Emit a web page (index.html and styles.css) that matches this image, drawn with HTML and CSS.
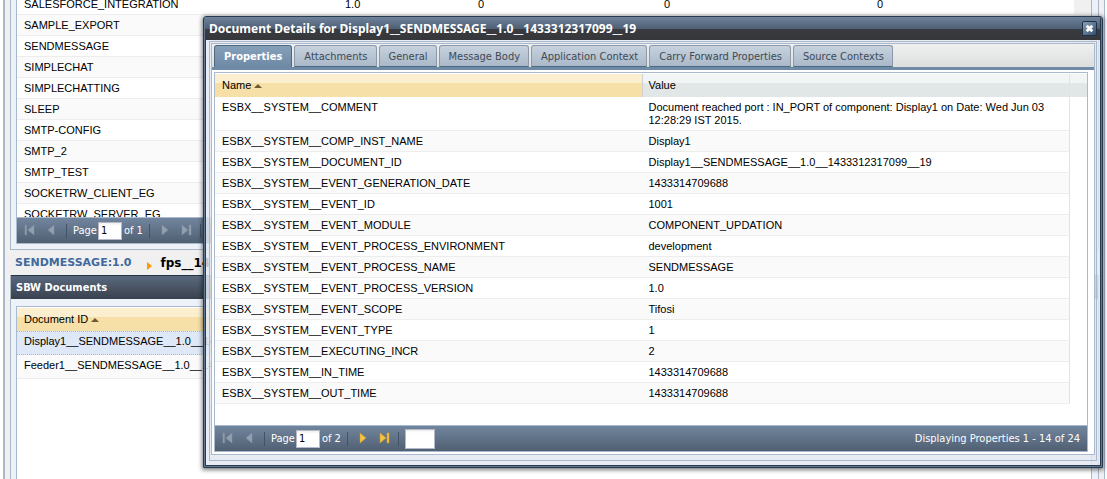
FILE: index.html
```html
<!DOCTYPE html>
<html lang="en">
<head>
    <meta charset="UTF-8">
    <meta name="viewport" content="width=device-width, initial-scale=1.0">
    <title>SBW Documents</title>
    <link rel="stylesheet" href="styles.css">
</head>
<body>
    <!-- Shared toolbar icons -->
    <svg class="sprite" aria-hidden="true">
        <symbol id="icon-first" viewBox="0 0 16 16"><path d="M3 2h1.5v10H3zM12 2v10L6 7z"/></symbol>
        <symbol id="icon-prev" viewBox="0 0 16 16"><path d="M10 2v10L4 7z"/></symbol>
        <symbol id="icon-next" viewBox="0 0 16 16"><path d="M6 2v10l6-5z"/></symbol>
        <symbol id="icon-last" viewBox="0 0 16 16"><path d="M4 2v10l6-5zM11 2h2v10h-2z"/></symbol>
    </svg>

    <main class="page">
        <section class="panel panel-top">
            <div class="grid">
                <div class="grid-view">
                    <table class="app-table">
                        <colgroup><col class="col-app"><col class="col-version"><col class="col-a"><col class="col-b"><col></colgroup>
                        <tbody>
                            <tr><td>SALESFORCE_INTEGRATION</td><td>1.0</td><td>0</td><td>0</td><td>0</td></tr>
                            <tr><td>SAMPLE_EXPORT</td><td>1.0</td><td>0</td><td>0</td><td>0</td></tr>
                            <tr><td>SENDMESSAGE</td><td></td><td></td><td></td><td></td></tr>
                            <tr><td>SIMPLECHAT</td><td></td><td></td><td></td><td></td></tr>
                            <tr><td>SIMPLECHATTING</td><td></td><td></td><td></td><td></td></tr>
                            <tr><td>SLEEP</td><td></td><td></td><td></td><td></td></tr>
                            <tr><td>SMTP-CONFIG</td><td></td><td></td><td></td><td></td></tr>
                            <tr><td>SMTP_2</td><td></td><td></td><td></td><td></td></tr>
                            <tr><td>SMTP_TEST</td><td></td><td></td><td></td><td></td></tr>
                            <tr><td>SOCKETRW_CLIENT_EG</td><td></td><td></td><td></td><td></td></tr>
                            <tr><td>SOCKETRW_SERVER_EG</td><td></td><td></td><td></td><td></td></tr>
                        </tbody>
                    </table>
                </div>
                <div class="pager">
                    <button type="button" aria-label="First page" disabled><svg><use href="#icon-first"/></svg></button>
                    <button type="button" aria-label="Previous page" disabled><svg><use href="#icon-prev"/></svg></button>
                    <span class="separator"></span>
                    <label for="appPage">Page</label>
                    <input class="page-input" id="appPage" type="text" value="1">
                    <span>of 1</span>
                    <span class="separator"></span>
                    <button type="button" aria-label="Next page" disabled><svg><use href="#icon-next"/></svg></button>
                    <button type="button" aria-label="Last page" disabled><svg><use href="#icon-last"/></svg></button>
                    <span class="separator"></span>
                </div>
            </div>
        </section>

        <nav class="breadcrumb">
            <a href="#">SENDMESSAGE:1.0</a>
            <span class="crumb-arrow"></span>
            <span>fps__14</span>
        </nav>

        <section class="panel panel-documents">
            <h2>SBW Documents</h2>
            <div class="panel-body">
                <div class="grid">
                    <table class="document-table">
                        <thead>
                            <tr><th class="sorted">Document ID <span class="sort-arrow"></span></th></tr>
                        </thead>
                        <tbody>
                            <tr class="selected"><td>Display1__SENDMESSAGE__1.0__1433312317099__19</td></tr>
                            <tr><td>Feeder1__SENDMESSAGE__1.0__1433312317099__19</td></tr>
                        </tbody>
                    </table>
                </div>
            </div>
        </section>
    </main>

    <div class="window" role="dialog" aria-labelledby="windowTitle">
        <div class="window-header">
            <h1 id="windowTitle">Document Details for Display1__SENDMESSAGE__1.0__1433312317099__19</h1>
            <button class="close" type="button" aria-label="Close">
                <svg viewBox="0 0 14 14"><path d="M4 4l6 6M10 4l-6 6"/></svg>
            </button>
        </div>
        <div class="window-body">
            <div class="tab-panel">
                <div class="tabs" role="tablist">
                    <button class="tab active" type="button" role="tab" aria-selected="true">Properties</button>
                    <button class="tab" type="button" role="tab">Attachments</button>
                    <button class="tab" type="button" role="tab">General</button>
                    <button class="tab" type="button" role="tab">Message Body</button>
                    <button class="tab" type="button" role="tab">Application Context</button>
                    <button class="tab" type="button" role="tab">Carry Forward Properties</button>
                    <button class="tab" type="button" role="tab">Source Contexts</button>
                </div>
                <div class="tab-content">
                    <div class="grid">
                        <table class="property-table">
                            <colgroup><col><col><col class="col-scroll"></colgroup>
                            <thead>
                                <tr><th class="sorted">Name <span class="sort-arrow"></span></th><th>Value</th><th></th></tr>
                            </thead>
                            <tbody>
                                <tr><td>ESBX__SYSTEM__COMMENT</td><td>Document reached port : IN_PORT of component: Display1 on Date: Wed Jun 03 12:28:29 IST 2015.</td><td></td></tr>
                                <tr><td>ESBX__SYSTEM__COMP_INST_NAME</td><td>Display1</td><td></td></tr>
                                <tr><td>ESBX__SYSTEM__DOCUMENT_ID</td><td>Display1__SENDMESSAGE__1.0__1433312317099__19</td><td></td></tr>
                                <tr><td>ESBX__SYSTEM__EVENT_GENERATION_DATE</td><td>1433314709688</td><td></td></tr>
                                <tr><td>ESBX__SYSTEM__EVENT_ID</td><td>1001</td><td></td></tr>
                                <tr><td>ESBX__SYSTEM__EVENT_MODULE</td><td>COMPONENT_UPDATION</td><td></td></tr>
                                <tr><td>ESBX__SYSTEM__EVENT_PROCESS_ENVIRONMENT</td><td>development</td><td></td></tr>
                                <tr><td>ESBX__SYSTEM__EVENT_PROCESS_NAME</td><td>SENDMESSAGE</td><td></td></tr>
                                <tr><td>ESBX__SYSTEM__EVENT_PROCESS_VERSION</td><td>1.0</td><td></td></tr>
                                <tr><td>ESBX__SYSTEM__EVENT_SCOPE</td><td>Tifosi</td><td></td></tr>
                                <tr><td>ESBX__SYSTEM__EVENT_TYPE</td><td>1</td><td></td></tr>
                                <tr><td>ESBX__SYSTEM__EXECUTING_INCR</td><td>2</td><td></td></tr>
                                <tr><td>ESBX__SYSTEM__IN_TIME</td><td>1433314709688</td><td></td></tr>
                                <tr><td>ESBX__SYSTEM__OUT_TIME</td><td>1433314709688</td><td></td></tr>
                            </tbody>
                        </table>
                        <div class="pager">
                            <button type="button" aria-label="First page" disabled><svg><use href="#icon-first"/></svg></button>
                            <button type="button" aria-label="Previous page" disabled><svg><use href="#icon-prev"/></svg></button>
                            <span class="separator"></span>
                            <label for="propertyPage">Page</label>
                            <input class="page-input" id="propertyPage" type="text" value="1">
                            <span>of 2</span>
                            <span class="separator"></span>
                            <button type="button" aria-label="Next page"><svg><use href="#icon-next"/></svg></button>
                            <button type="button" aria-label="Last page"><svg><use href="#icon-last"/></svg></button>
                            <span class="separator"></span>
                            <input class="size-input" type="text" aria-label="Page size">
                            <span class="status">Displaying Properties 1 - 14 of 24</span>
                        </div>
                    </div>
                </div>
            </div>
        </div>
    </div>
</body>
</html>
```
FILE: styles.css
```css
* {
    box-sizing: border-box;
}
body {
    margin: 0;
    font-family: "Liberation Sans", Arial, sans-serif;
    font-size: 11px;
    line-height: 13px;
    color: #000;
    background-color: #fff;
    overflow: hidden;
}
.sprite {
    display: none;
}
.page {
    display: flex;
    flex-direction: column;
    height: 100vh;
    margin: 0 2px 0 3px;
    padding: 0 5px;
    border-left: 2px solid #a9bace;
    border-right: 1px solid #a9bace;
    background-color: #f0f0f0;
    overflow: hidden;
}

/* Panels and grids */
.panel {
    background-color: #edf2f8;
    border: 1px solid #a9b6c6;
}
.panel-top {
    border-top: none;
    padding: 0 6px 5px 5px;
}
.grid {
    background-color: #fff;
    border: 1px solid #a9bace;
}
.panel-top .grid {
    border-top: none;
}
.grid-view {
    height: 217px;
    overflow: hidden;
    padding-right: 17px;
    background: linear-gradient(#f0f0f0, #f0f0f0) right / 17px 100% no-repeat #fff;
}
table {
    width: 100%;
    table-layout: fixed;
    border-collapse: separate;
    border-spacing: 0;
}
td {
    padding: 4px 6px 3px 7px;
    border-bottom: 1px solid #ededed;
    vertical-align: top;
}
tbody tr:nth-child(even) td {
    background-color: #fafafa;
}
th {
    padding: 5px 6px 5px 7px;
    text-align: left;
    font-weight: normal;
    background: linear-gradient(#f1f5f6 9px, #e1e7e6 9px);
}
th.sorted {
    background: linear-gradient(#fcefcf 9px, #f6e0a8 9px);
}
.sort-arrow {
    display: inline-block;
    border: 4px solid transparent;
    border-top: none;
    border-bottom-color: #705a35;
    vertical-align: 1px;
}

/* Application list, scrolled part way down */
.app-table {
    margin-top: -6px;
}
.app-table td {
    height: 21px;
}
.col-app {
    width: 321px;
}
.col-version {
    width: 133px;
}
.col-a {
    width: 186px;
}
.col-b {
    width: 213px;
}

/* Paging toolbar */
.pager {
    display: flex;
    align-items: center;
    height: 26px;
    padding: 0 5px;
    border-top: 1px solid #a9bace;
    background: linear-gradient(#71859e, #506072);
    color: #fff;
    font-family: "DejaVu Sans Condensed", Tahoma, sans-serif;
}
.pager button {
    width: 16px;
    height: 16px;
    margin-right: 6px;
    padding: 0;
    border: none;
    background: none;
    cursor: pointer;
}
.pager svg {
    display: block;
    width: 16px;
    height: 16px;
    fill: #f3c342;
    stroke: #d39c22;
    stroke-width: 0.5;
}
.pager button:disabled svg {
    fill: #93a0af;
    stroke: #8492a3;
}
.separator {
    width: 1px;
    height: 14px;
    margin-right: 6px;
    background-color: #435366;
}
.pager span + .separator {
    margin-left: 6px;
}
.pager input {
    border: 1px solid #b5b8c8;
    background: linear-gradient(#eee, #fff 3px);
    font: inherit;
}
.page-input {
    width: 24px;
    height: 18px;
    margin: 0 2px 0 1px;
    padding: 0 2px;
}
.size-input {
    width: 30px;
    height: 20px;
}
.status {
    margin-left: auto;
    padding-right: 2px;
}

/* Breadcrumb between the two panels */
.breadcrumb {
    display: flex;
    align-items: center;
    height: 25px;
    padding-left: 5px;
    font: bold 12px "DejaVu Sans", Verdana, sans-serif;
}
.breadcrumb a {
    color: #41699c;
    font-size: 11px;
    text-decoration: none;
}
.crumb-arrow {
    margin: 6px 9px 0 15px;
    border: 4px solid transparent;
    border-left: 5px solid #f90;
    border-right: none;
}

/* Documents panel */
.panel-documents {
    display: flex;
    flex: 1;
    flex-direction: column;
    border-top: none;
    border-bottom: none;
}
.panel-documents h2 {
    margin: 0;
    padding: 5px;
    border-top: 1px solid #263445;
    background: linear-gradient(#59697d, #39414e);
    color: #fff;
    font: bold 11px/13px "DejaVu Sans Condensed", Tahoma, sans-serif;
}
.panel-body {
    display: flex;
    flex: 1;
    padding: 7px 6px 0 5px;
}
.panel-body .grid {
    flex: 1;
    padding: 1px 1px 0 0;
    border-bottom: none;
}
.document-table td {
    height: 24px;
}
.document-table .selected td {
    padding-top: 3px;
    border-top: 1px dotted #a3bae9;
    border-bottom: 1px dotted #a3bae9;
    background-color: #dfe8f6;
}

/* Document details window */
.window {
    position: absolute;
    top: 16px;
    left: 203px;
    right: 4px;
    padding: 0 2px 2px 1px;
    border: 1px solid #273a4e;
    border-radius: 3px 3px 0 0;
    background-color: rgba(228, 232, 238, 0.85);
    box-shadow: 0 1px 4px 1px rgba(0, 0, 0, 0.5), inset 0 0 0 1px #5d7893, inset 0 0 0 2px #273a4e;
}
.window-header {
    display: flex;
    align-items: center;
    justify-content: space-between;
    height: 23px;
    padding: 0 3px 0 4px;
    background: linear-gradient(#6f839c, #4d5e73 12px, #393b40 12px, #35373b);
    color: #fff;
}
.window-header h1 {
    margin: 0;
    font: bold 12px/13px "Noto Sans", Tahoma, sans-serif;
}
.close {
    width: 15px;
    height: 15px;
    padding: 0;
    border: 1px solid #1d3047;
    border-radius: 2px;
    background: linear-gradient(135deg, #8ba0b8, #334f6d);
    cursor: pointer;
}
.close svg {
    display: block;
    width: 13px;
    height: 13px;
    stroke: #fff;
    stroke-width: 3;
}
.window-body {
    margin: 1px 3px 4px 4px;
    border: 1px solid #a9bace;
}
.tab-panel {
    margin: 1px 1px 5px;
    border: 1px solid #a9bace;
    background-color: #fff;
}
.tabs {
    display: flex;
    align-items: flex-end;
    gap: 2px;
    padding: 1px 2px 0;
    border-bottom: 3px solid #6f8aa6;
    background: linear-gradient(#f0f0f0, #dcdede);
}
.tab {
    height: 22px;
    padding: 0 8px 0 9px;
    border: 1px solid #8a99ab;
    border-bottom-color: #4d6885;
    border-radius: 3px 3px 0 0;
    background: linear-gradient(#c7d2de, #a9b8c8);
    color: #3f4a55;
    font: 11px "DejaVu Sans Condensed", Tahoma, sans-serif;
    cursor: pointer;
}
.tab.active {
    padding-right: 9px;
    border-color: #4d6885;
    border-bottom-color: #6f8aa6;
    background: linear-gradient(#86a0ba, #6f8aa6);
    color: #fff;
    font-weight: bold;
}
.tab-content {
    padding: 2px 6px 2px 2px;
}
.tab-content .grid {
    padding-top: 1px;
}
.property-table {
    margin-bottom: 21px;
}
.property-table td:nth-child(2),
.property-table th:nth-child(2) {
    padding-left: 6px;
    border-right: 1px solid #dfe3e3;
}
.property-table th.sorted {
    border-right: 1px solid #d0d0d0;
}
.property-table tbody td:last-child {
    border: none;
    background: none;
}
.col-scroll {
    width: 17px;
}
```
